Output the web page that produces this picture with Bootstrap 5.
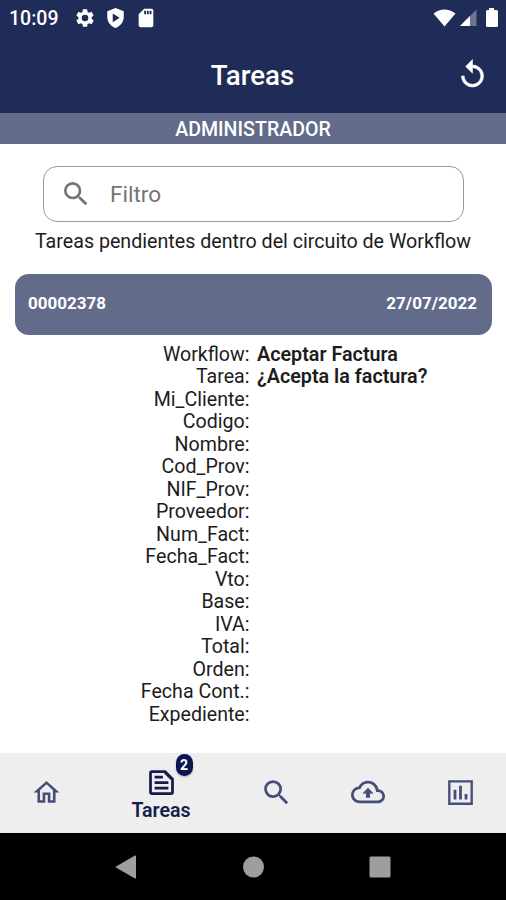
<!DOCTYPE html>
<html lang="es">
<head>
<meta charset="utf-8">
<meta name="viewport" content="width=device-width, initial-scale=1">
<title>Tareas</title>
<link href="https://cdn.jsdelivr.net/npm/bootstrap@5.3.0/dist/css/bootstrap.min.css" rel="stylesheet">
<style>
:root{--navy:#1f2c57;--slate:#626b89}
body{font-family:Roboto,"Liberation Sans",sans-serif;color:#1c1c1c;width:506px;height:900px;overflow:hidden}
svg{display:block;fill:currentColor;flex:none}
.status{height:36px;background:var(--navy);padding:0 7px 0 9px}
.clock{font-size:19.5px;font-weight:500;line-height:34px;padding-top:2px;width:65px}
.appbar{height:76.5px;background:var(--navy);padding:3px 17px 0}
.appbar h1{font-size:27.7px;font-weight:500;line-height:1}
.side{width:32px}
.user{height:31px;background:var(--slate);font-size:19.6px;font-weight:500;line-height:33.5px}
.filter{height:56px;margin:22.5px 42px 0 43px;border:1px solid #999;border-radius:14px;padding-left:16px;color:#757575}
.filter input{font-size:22.6px;color:#757575;margin:2px 0 0 18px}
.filter input::placeholder{color:#757575;opacity:1}
.hint{font-size:19.66px;line-height:24px;margin-top:8px}
.task{height:61px;margin:19.500px 14px 0 15px;border-radius:14px;background:var(--slate);padding:0 15px 0 13px;font-size:17px;font-weight:700}
.fields{font-size:19.6px;line-height:22.5px;margin-top:9px;display:grid;grid-template-columns:249.5px 1fr;column-gap:7.5px}
.fields dt{font-weight:400;text-align:right;height:22.5px}
.fields dd{font-weight:600;margin:0;height:22.5px;font-size:19.75px}
.tabs{height:80px;background:#eee;color:#454e78}
.tab{flex:1 1 0;padding-bottom:2px}
.tab.on{flex-grow:1.5;color:#151d4d;font-size:19.6px;font-weight:600;padding:2px 0 0}
.tab-label{line-height:23px}
.count{left:15px;top:-12px;width:17px;height:22px;border-radius:9px;background:#0c1550;font-size:14px;line-height:22px;box-shadow:0 1px 2px #0004}
.system{height:67px;background:#000;color:#9e9e9e}
</style>
<script src="https://cdn.jsdelivr.net/npm/bootstrap@5.3.0/dist/js/bootstrap.bundle.min.js"></script>
</head>
<body class="d-flex flex-column bg-white">
<header class="text-white">
  <div class="status d-flex align-items-center">
    <span class="clock">10:09</span>
    <svg width="22" height="22" viewBox="0 0 24 24"><path d="M19.14 12.94c.04-.3.06-.61.06-.94s-.02-.64-.07-.94l2.03-1.58a.5.5 0 0 0 .12-.61l-1.92-3.32a.5.5 0 0 0-.59-.22l-2.39.96a7 7 0 0 0-1.62-.94l-.36-2.54a.5.5 0 0 0-.48-.41h-3.84a.5.5 0 0 0-.47.41l-.36 2.54c-.59.24-1.13.57-1.62.94l-2.39-.96a.5.5 0 0 0-.59.22L2.74 8.87a.5.5 0 0 0 .12.61l2.03 1.58a6 6 0 0 0 0 1.88l-2.03 1.58a.5.5 0 0 0-.12.61l1.92 3.32c.12.22.37.29.59.22l2.39-.96c.5.38 1.03.7 1.62.94l.36 2.54c.05.24.24.41.48.41h3.84c.24 0 .44-.17.47-.41l.36-2.54a7 7 0 0 0 1.62-.94l2.39.96c.22.08.47 0 .59-.22l1.92-3.32a.5.5 0 0 0-.12-.61zM12 15.6a3.6 3.6 0 1 1 0-7.2 3.6 3.6 0 0 1 0 7.2z"/></svg>
    <svg class="ms-2" width="23" height="22" viewBox="0 0 24 24"><path fill-rule="evenodd" d="M12 1 3 4.500V11c0 5.500 3.800 10.200 9 12 5.200-1.800 9-6.500 9-12V4.500zM9 7l7.500 4.700L9 16.500z"/></svg>
    <svg class="ms-2" width="22" height="22" viewBox="0 0 24 24"><path d="M18 2h-8L4 8v12c0 1.100.9 2 2 2h12c1.100 0 2-.9 2-2V4c0-1.100-.9-2-2-2zm-6 6h-2V4h2zm3 0h-2V4h2zm3 0h-2V4h2z"/></svg>
    <svg class="ms-auto me-1" width="23" height="18" viewBox="0 0 23 18"><path d="M.5 4.500Q11.500-3.500 22.500 4.500L11.500 17.500z"/></svg>
    <svg width="17" height="18" viewBox="0 0 18 18"><path opacity=".35" d="M17.500 0v17.500H0z"/><path d="M10.500 7v10.500H0z"/></svg>
    <svg class="ms-2" width="14" height="20" viewBox="0 0 14 20"><path d="M4 0h5v2h2.500q1.500 0 1.500 1.500v14q0 1.500-1.500 1.500h-9Q1 19 1 17.500v-14Q1 2 2.500 2H4z"/></svg>
  </div>
  <div class="appbar d-flex align-items-center justify-content-between">
    <span class="side"></span>
    <h1 class="m-0">Tareas</h1>
    <svg width="33" height="36" viewBox="0 0 24 26"><path d="M12 5V1L7 6l5 5V7c3.310 0 6 2.690 6 6s-2.690 6-6 6-6-2.690-6-6H4c0 4.420 3.580 8 8 8s8-3.580 8-8-3.580-8-8-8z" stroke="currentColor" stroke-width=".4"/></svg>
  </div>
  <div class="user text-center">ADMINISTRADOR</div>
</header>
<main class="flex-grow-1">
  <label class="filter d-flex align-items-center">
    <svg width="32" height="32" viewBox="0 0 24 24"><path d="M15.500 14h-.79l-.28-.27A6.470 6.470 0 0 0 16 9.500 6.500 6.500 0 1 0 9.500 16c1.610 0 3.090-.59 4.230-1.570l.27.28v.79l5 4.990L20.490 19zm-6 0a4.500 4.500 0 1 1 0-9 4.500 4.500 0 0 1 0 9z"/></svg>
    <input class="border-0 p-0 bg-transparent" type="text" placeholder="Filtro">
  </label>
  <p class="hint text-center mb-0">Tareas pendientes dentro del circuito de Workflow</p>
  <div class="task d-flex align-items-center justify-content-between text-white"><span>00002378</span><span>27/07/2022</span></div>
  <dl class="fields mb-0">
    <dt>Workflow:</dt><dd>Aceptar Factura</dd>
    <dt>Tarea:</dt><dd>¿Acepta la factura?</dd>
    <dt>Mi_Cliente:</dt><dd></dd>
    <dt>Codigo:</dt><dd></dd>
    <dt>Nombre:</dt><dd></dd>
    <dt>Cod_Prov:</dt><dd></dd>
    <dt>NIF_Prov:</dt><dd></dd>
    <dt>Proveedor:</dt><dd></dd>
    <dt>Num_Fact:</dt><dd></dd>
    <dt>Fecha_Fact:</dt><dd></dd>
    <dt>Vto:</dt><dd></dd>
    <dt>Base:</dt><dd></dd>
    <dt>IVA:</dt><dd></dd>
    <dt>Total:</dt><dd></dd>
    <dt>Orden:</dt><dd></dd>
    <dt>Fecha Cont.:</dt><dd></dd>
    <dt>Expediente:</dt><dd></dd>
  </dl>
</main>
<nav class="tabs d-flex align-items-stretch">
  <div class="tab d-flex align-items-center justify-content-center"><svg width="31" height="31" viewBox="0 0 24 24"><path d="m12 5.690 5 4.500V18h-2v-6H9v6H7v-7.810zM12 3 2 12h3v8h6v-6h2v6h6v-8h3z"/></svg></div>
  <div class="tab on d-flex flex-column align-items-center justify-content-center">
    <div class="position-relative">
      <svg width="33" height="33" viewBox="0 0 24 24"><path d="M15 3H5a2 2 0 0 0-2 2v14c0 1.100.89 2 1.990 2H19a2 2 0 0 0 2-2V9zM5 19V5h9v.5L18.500 10h.5v9zM7 7h6v2H7zm0 4h10v2H7zm0 4h10v2H7z"/></svg>
      <span class="count position-absolute text-white fw-bold text-center ms-3">2</span>
    </div>
    <span class="tab-label">Tareas</span>
  </div>
  <div class="tab d-flex align-items-center justify-content-center"><svg width="33" height="33" viewBox="0 0 24 24"><path d="M15.500 14h-.79l-.28-.27A6.470 6.470 0 0 0 16 9.500 6.500 6.500 0 1 0 9.500 16c1.610 0 3.090-.59 4.230-1.570l.27.28v.79l5 4.990L20.490 19zm-6 0a4.500 4.500 0 1 1 0-9 4.500 4.500 0 0 1 0 9z"/></svg></div>
  <div class="tab d-flex align-items-center justify-content-center"><svg width="34" height="34" viewBox="0 0 24 24"><path d="M19.350 10.040A7.490 7.490 0 0 0 12 4C9.110 4 6.600 5.640 5.350 8.040A5.994 5.994 0 0 0 0 14c0 3.310 2.690 6 6 6h13c2.760 0 5-2.240 5-5 0-2.640-2.050-4.780-4.650-4.960zM19 18H6c-2.210 0-4-1.790-4-4 0-2.050 1.530-3.760 3.560-3.970l1.070-.11.500-.95A5.469 5.469 0 0 1 12 6c2.620 0 4.880 1.860 5.390 4.430l.3 1.500 1.530.11A2.980 2.980 0 0 1 19 18zM8 13h2.550v3h2.900v-3H16l-4-4z"/></svg></div>
  <div class="tab d-flex align-items-center justify-content-center"><svg width="33" height="33" viewBox="0 0 24 24"><path fill-rule="evenodd" d="M3 3h18v18H3zM4.700 4.700v14.600h14.600V4.700zM7 10h2v7H7zm4-3h2v10h-2zm4 6h2v4h-2z"/></svg></div>
</nav>
<div class="system d-flex align-items-center justify-content-center">
  <svg width="380" height="26" viewBox="0 0 380 26"><path d="M73 2.500v21q0 1.500-1.500.7L53 13.500q-1-.5 0-1L71.500 1.800q1.500-.8 1.500.7z"/><circle cx="190.500" cy="13" r="10.500"/><rect x="306.500" y="2.500" width="21" height="21" rx="1.500"/></svg>
</div>
</body>
</html>
